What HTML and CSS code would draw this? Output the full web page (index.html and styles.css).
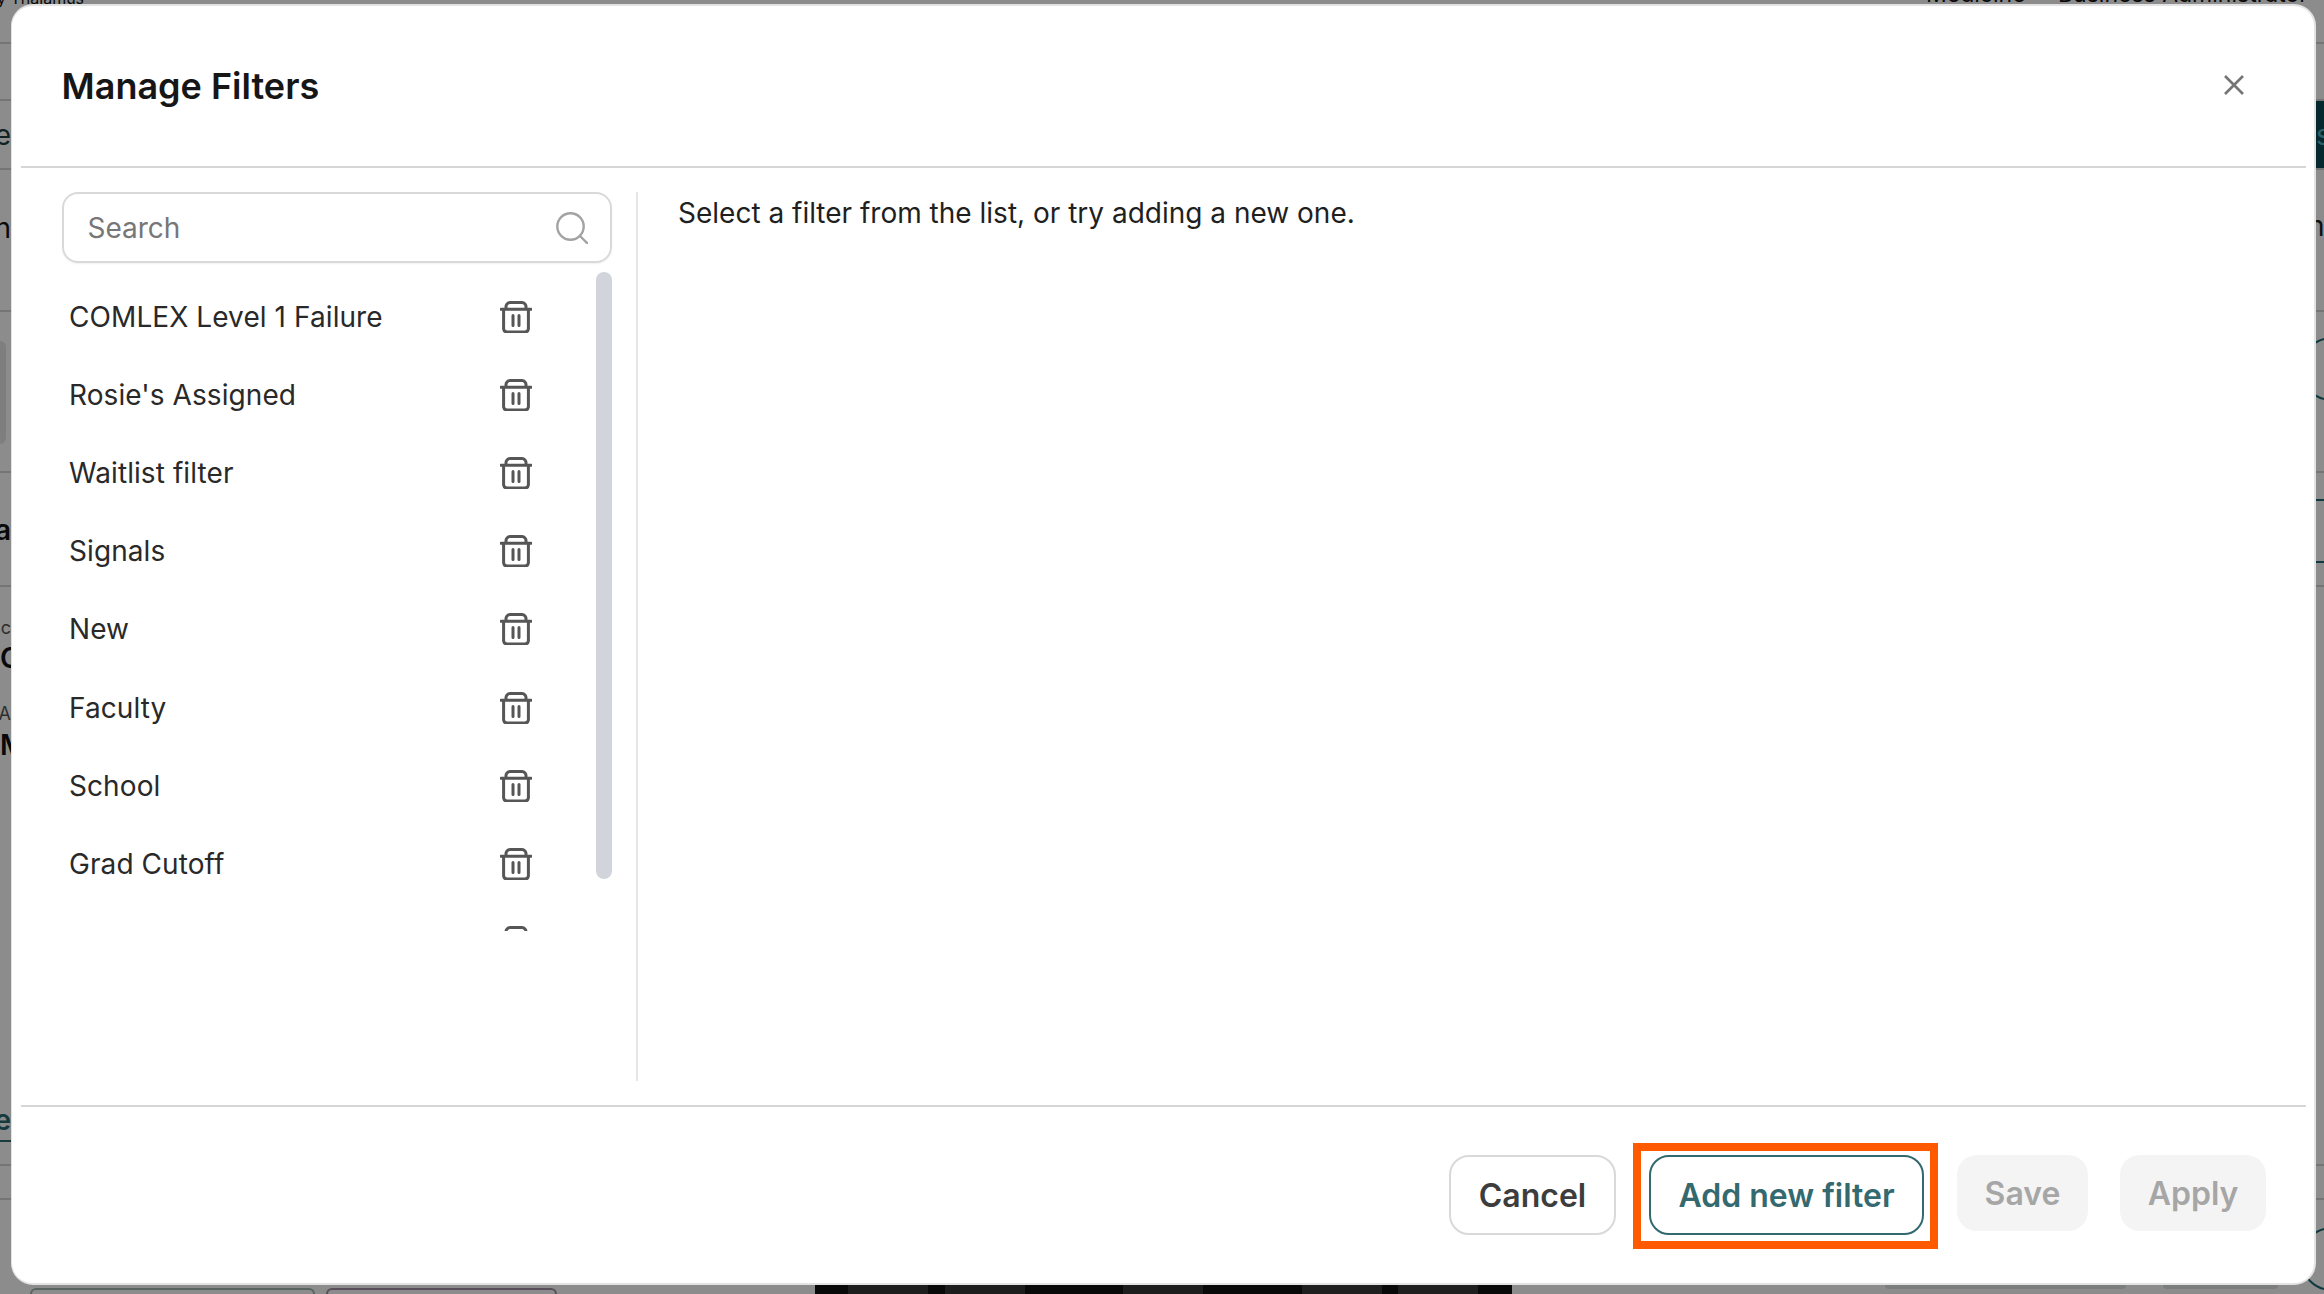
FILE: index.html
```html
<!DOCTYPE html>
<html>
<head>
<title>Manage Filters</title>
<link rel="stylesheet" href="styles.css">
</head>
<body>

<!-- page under the dialog, only the edges show -->
<div class="page">
  <div class="pg-row pg-h43">
    <span class="pg-top-left">y Thalamus</span>
    <span class="pg-top-right">Medicine &nbsp;&middot;&nbsp; Business Administrator</span>
  </div>
  <div class="pg-row pg-h57"></div>
  <div class="pg-row pg-h69">
    <span class="sliver sl-e">e</span>
    <span class="pg-teal">s</span>
  </div>
  <div class="pg-row pg-h142">
    <span class="sliver sl-n">n</span>
    <span class="pg-right sl-m">m</span>
  </div>
  <div class="pg-row pg-h161">
    <span class="pg-box"></span>
    <span class="pg-right"><span class="pg-circle pg-circle-1"></span></span>
  </div>
  <div class="pg-row pg-h114">
    <span class="sliver sl-ta">ta</span>
    <span class="pg-right"><span class="pg-outline"></span></span>
  </div>
  <div class="pg-row pg-h580">
    <div class="pg-col">
      <span class="sliver sl-sc">sc</span>
      <span class="sliver sl-c">C</span>
      <span class="sliver sl-a">A</span>
      <span class="sliver sl-mm">M</span>
      <span class="sliver sl-link">e</span>
    </div>
  </div>
  <div class="pg-row pg-h34"></div>
  <div class="pg-row-last">
    <div class="pg-chips">
      <span class="chip chip-a"></span>
      <span class="chip chip-b"></span>
      <span class="pg-strip"></span>
      <span class="chip-low chip-c"></span>
      <span class="chip-low chip-d"></span>
    </div>
    <span class="pg-right"><span class="pg-circle pg-circle-2"></span></span>
  </div>
</div>
<div class="dim"></div>

<div class="modal">
  <div class="modal-head">
    <h2 class="modal-title">Manage Filters</h2>
    <svg class="close-icon" width="20" height="20" viewBox="0 0 20 20"><path d="M1 1 19 19M19 1 1 19"/></svg>
  </div>

  <div class="modal-body">
    <div class="side">
      <div class="search">
        <span class="search-text">Search</span>
        <svg class="search-icon" width="32" height="32" viewBox="0 0 32 32"><circle cx="14.5" cy="14.5" r="13.2"/><path d="M24 24 31.5 31.5"/></svg>
      </div>
      <div class="list-wrap">
        <div class="list">
          <div class="row"><span>COMLEX Level 1 Failure</span><svg class="trash" width="32" height="32" viewBox="0 0 32 32"><path d="M1 8.2H31M6 8.2V6A4 4 0 0 1 10 1.6H22A4 4 0 0 1 26 6V8.2M3.6 8.2V28A3.6 3.6 0 0 0 7.2 31H24.8A3.6 3.6 0 0 0 28.4 28V8.2M13 14.5V24.5M19 14.5V24.5"/></svg></div>
          <div class="row"><span>Rosie's Assigned</span><svg class="trash" width="32" height="32" viewBox="0 0 32 32"><path d="M1 8.2H31M6 8.2V6A4 4 0 0 1 10 1.6H22A4 4 0 0 1 26 6V8.2M3.6 8.2V28A3.6 3.6 0 0 0 7.2 31H24.8A3.6 3.6 0 0 0 28.4 28V8.2M13 14.5V24.5M19 14.5V24.5"/></svg></div>
          <div class="row"><span>Waitlist filter</span><svg class="trash" width="32" height="32" viewBox="0 0 32 32"><path d="M1 8.2H31M6 8.2V6A4 4 0 0 1 10 1.6H22A4 4 0 0 1 26 6V8.2M3.6 8.2V28A3.6 3.6 0 0 0 7.2 31H24.8A3.6 3.6 0 0 0 28.4 28V8.2M13 14.5V24.5M19 14.5V24.5"/></svg></div>
          <div class="row"><span>Signals</span><svg class="trash" width="32" height="32" viewBox="0 0 32 32"><path d="M1 8.2H31M6 8.2V6A4 4 0 0 1 10 1.6H22A4 4 0 0 1 26 6V8.2M3.6 8.2V28A3.6 3.6 0 0 0 7.2 31H24.8A3.6 3.6 0 0 0 28.4 28V8.2M13 14.5V24.5M19 14.5V24.5"/></svg></div>
          <div class="row"><span>New</span><svg class="trash" width="32" height="32" viewBox="0 0 32 32"><path d="M1 8.2H31M6 8.2V6A4 4 0 0 1 10 1.6H22A4 4 0 0 1 26 6V8.2M3.6 8.2V28A3.6 3.6 0 0 0 7.2 31H24.8A3.6 3.6 0 0 0 28.4 28V8.2M13 14.5V24.5M19 14.5V24.5"/></svg></div>
          <div class="row"><span>Faculty</span><svg class="trash" width="32" height="32" viewBox="0 0 32 32"><path d="M1 8.2H31M6 8.2V6A4 4 0 0 1 10 1.6H22A4 4 0 0 1 26 6V8.2M3.6 8.2V28A3.6 3.6 0 0 0 7.2 31H24.8A3.6 3.6 0 0 0 28.4 28V8.2M13 14.5V24.5M19 14.5V24.5"/></svg></div>
          <div class="row"><span>School</span><svg class="trash" width="32" height="32" viewBox="0 0 32 32"><path d="M1 8.2H31M6 8.2V6A4 4 0 0 1 10 1.6H22A4 4 0 0 1 26 6V8.2M3.6 8.2V28A3.6 3.6 0 0 0 7.2 31H24.8A3.6 3.6 0 0 0 28.4 28V8.2M13 14.5V24.5M19 14.5V24.5"/></svg></div>
          <div class="row"><span>Grad Cutoff</span><svg class="trash" width="32" height="32" viewBox="0 0 32 32"><path d="M1 8.2H31M6 8.2V6A4 4 0 0 1 10 1.6H22A4 4 0 0 1 26 6V8.2M3.6 8.2V28A3.6 3.6 0 0 0 7.2 31H24.8A3.6 3.6 0 0 0 28.4 28V8.2M13 14.5V24.5M19 14.5V24.5"/></svg></div>
          <div class="row"><span></span><svg class="trash" width="32" height="32" viewBox="0 0 32 32"><path d="M1 8.2H31M6 8.2V6A4 4 0 0 1 10 1.6H22A4 4 0 0 1 26 6V8.2M3.6 8.2V28A3.6 3.6 0 0 0 7.2 31H24.8A3.6 3.6 0 0 0 28.4 28V8.2M13 14.5V24.5M19 14.5V24.5"/></svg></div>
        </div>
        <div class="scrollbar"></div>
      </div>
    </div>
    <div class="detail">Select a filter from the list, or try adding a new one.</div>
  </div>

  <div class="modal-foot">
    <button class="btn btn-cancel">Cancel</button>
    <button class="btn btn-add">Add new filter</button>
    <button class="btn btn-off btn-save">Save</button>
    <button class="btn btn-off btn-apply">Apply</button>
  </div>
</div>

</body>
</html>
```

FILE: styles.css
```css
/* Manage Filters dialog over a dimmed page */

html, body
{ margin: 0;
height: 1294px;
overflow: hidden;
}

body
{ font-family: "Inter", "Liberation Sans", sans-serif;
font-variant-ligatures: none;
background-color: #fff;
}

/* ---- page underneath ---- */

.page
{ display: flex;
flex-direction: column;
height: 1294px;
overflow: hidden;
color: #111;
font-size: 28px;
}

.dim
{ position: fixed;
top: 0; left: 0; right: 0; bottom: 0;
background-color: rgba(0,0,0,.45);
}

.pg-row
{ display: flex;
justify-content: space-between;
box-sizing: border-box;
border-bottom: 2px solid #d6d6d6;
}

.pg-h43 { height: 44px; overflow: hidden; }
.pg-h57 { height: 57px; }
.pg-h69 { height: 69px; }
.pg-h142 { height: 142px; }
.pg-h161 { height: 161px; }
.pg-h114 { height: 114px; }
.pg-h580 { height: 580px; }
.pg-h34 { height: 34px; }

.pg-row-last
{ display: flex;
justify-content: space-between;
height: 94px;
}

.pg-top-left
{ margin: -12px 0 0 -3px;
line-height: 20px;
font-size: 16px;
}

.pg-top-right
{ margin: -21px 16px 0 0;
line-height: 30px;
font-size: 23px;
}

.sliver
{ display: block;
width: 11px;
overflow: hidden;
white-space: nowrap;
}

.sl-e { line-height: 69px; direction: rtl; color: #1f3f44; }
.sl-n { line-height: 116px; direction: rtl; }
.sl-ta { line-height: 114px; font-weight: 600; direction: rtl; }
.sl-m { padding-top: 40px; line-height: 32px; color: #222; }

.pg-col
{ display: flex;
flex-direction: column;
}

.sl-sc { margin-top: 32px; font-size: 18px; line-height: 18px; color: #555; direction: rtl; }
.sl-c { margin-top: 6px; line-height: 30px; font-weight: 600; }
.sl-a { margin-top: 32px; font-size: 18px; line-height: 18px; color: #555; direction: rtl; }
.sl-mm { margin-top: 7px; line-height: 30px; font-weight: 600; }
.sl-link
{ margin-top: 342px;
line-height: 36px;
color: #2a6a72;
font-weight: 600;
direction: rtl;
padding-bottom: 2px;
border-bottom: 2px solid #33696f;
}

.pg-teal
{ display: block;
width: 8px;
padding-left: 0;
background-color: #0a4a55;
color: #4fb0c0;
line-height: 69px;
overflow: hidden;
}

.pg-box
{ display: block;
width: 6px;
height: 103px;
box-sizing: border-box;
background-color: #e6e6e6;
border-radius: 0 10px 10px 0;
margin-top: 29px;
}

.pg-right
{ display: block;
width: 24px;
}

.pg-circle
{ display: block;
box-sizing: border-box;
width: 64px;
height: 64px;
border: 2px solid #1d6a75;
border-radius: 50%;
}

.pg-circle-1 { margin-top: 25px; }
.pg-circle-2 { margin-top: 27px; }

.pg-outline
{ display: block;
box-sizing: border-box;
width: 64px;
height: 64px;
margin-top: 26px;
border-top: 2px solid #1d6a75;
border-bottom: 2px solid #1d6a75;
}

.pg-chips
{ display: flex;
align-items: flex-end;
height: 94px;
}

.chip
{ display: block;
box-sizing: border-box;
height: 6px;
border: 2px solid #a0b8ae;
border-bottom: 0;
border-radius: 8px 8px 0 0;
}

.chip-a { width: 285px; margin-left: 30px; }
.chip-b { width: 231px; margin-left: 11px; border-color: #a090a4; }

.pg-strip
{ display: block;
width: 697px;
height: 9px;
margin-left: 258px;
background: linear-gradient(to right,
  #121212 0 33px, #363636 33px 113px, #121212 113px 130px, #363636 130px 210px,
  #121212 210px 308px, #363636 308px 388px, #121212 388px 487px, #3a3a3a 487px 567px,
  #121212 567px 583px, #3a3a3a 583px 663px, #121212 663px 697px);
}

.chip-low
{ display: block;
height: 4px;
margin-bottom: 5px;
background-color: #dfe5e3;
border-radius: 0 0 8px 8px;
}

.chip-c { width: 241px; margin-left: 373px; }
.chip-d { width: 115px; margin-left: 37px; }

/* ---- dialog ---- */

.modal
{ position: fixed;
top: 4px;
left: 11px;
width: 2305px;
height: 1281px;
box-sizing: border-box;
display: flex;
flex-direction: column;
padding: 0 8px 0 9px;
background-color: #fff;
border: solid #e3e3e3;
border-width: 2px 2px 2px 1px;
border-radius: 22px;
color: #1f1f1f;
}

.modal-head
{ display: flex;
align-items: center;
justify-content: space-between;
height: 160px;
padding: 0 62px 0 40.5px;
border-bottom: 2px solid #d6d6d6;
flex-shrink: 0;
}

.modal-title
{ margin: 0;
font-size: 36px;
font-weight: 600;
color: #161616;
padding-bottom: 1px;
}

.close-icon
{ fill: none;
stroke: #757575;
stroke-width: 2.6;
margin-bottom: 3px;
}

.modal-body
{ display: flex;
height: 939px;
flex-shrink: 0;
border-bottom: 2px solid #d6d6d6;
box-sizing: border-box;
padding-top: 24px;
padding-bottom: 24px;
}

.side
{ width: 617px;
box-sizing: border-box;
padding-left: 40.5px;
border-right: 2px solid #e6e6e6;
flex-shrink: 0;
}

.search
{ display: flex;
align-items: center;
justify-content: space-between;
box-sizing: border-box;
width: 550px;
height: 71px;
padding: 0 22px 0 24px;
border: 2px solid #d9d9d9;
border-radius: 16px;
box-shadow: 0 1px 2px rgba(0,0,0,.06);
}

.search-text
{ font-size: 28px;
color: #777;
}

.search-icon
{ fill: none;
stroke: #a3a3a3;
stroke-width: 2.4;
stroke-linecap: round;
}

.list-wrap
{ display: flex;
margin-top: 9px;
}

.list
{ width: 534.5px;
height: 659px;
padding: 6px 0 0 7.5px;
box-sizing: border-box;
overflow: hidden;
}

.row
{ display: flex;
align-items: center;
justify-content: space-between;
width: 463px;
height: 78.1px;
font-size: 28px;
letter-spacing: .08px;
color: #292929;
}

.trash
{ fill: none;
stroke: #565656;
stroke-width: 3;
stroke-linecap: round;
stroke-linejoin: round;
flex-shrink: 0;
}

.scrollbar
{ width: 16px;
height: 607px;
background-color: #d1d5db;
border-radius: 8px;
}

.detail
{ padding: 4px 0 0 40px;
font-size: 28px;
line-height: 34px;
color: #1f1f1f;
}

.modal-foot
{ display: flex;
align-items: flex-start;
justify-content: flex-end;
padding: 48px 40px 0 0;
}

.btn
{ font-family: inherit;
font-size: 32px;
font-weight: 600;
box-sizing: border-box;
height: 80px;
margin-left: 33px;
border-radius: 20px;
background-color: #fff;
padding: 0;
}

.btn-cancel
{ width: 167px;
border: 2px solid #d9d9d9;
color: #3d3d3d;
}

.btn-add
{ position: relative;
width: 275px;
border: 2px solid #33696f;
color: #33696f;
}

/* orange annotation box */
.btn-add::after
{ content: "";
position: absolute;
top: -14px; left: -18px; right: -16px; bottom: -16px;
border: 8px solid #ff5a00;
}

.btn-off
{ height: 76px;
border: 0;
background-color: #f4f4f4;
color: #a6a6a6;
}

.btn-save { width: 131px; }
.btn-apply { width: 146px; margin-left: 32px; }
```
